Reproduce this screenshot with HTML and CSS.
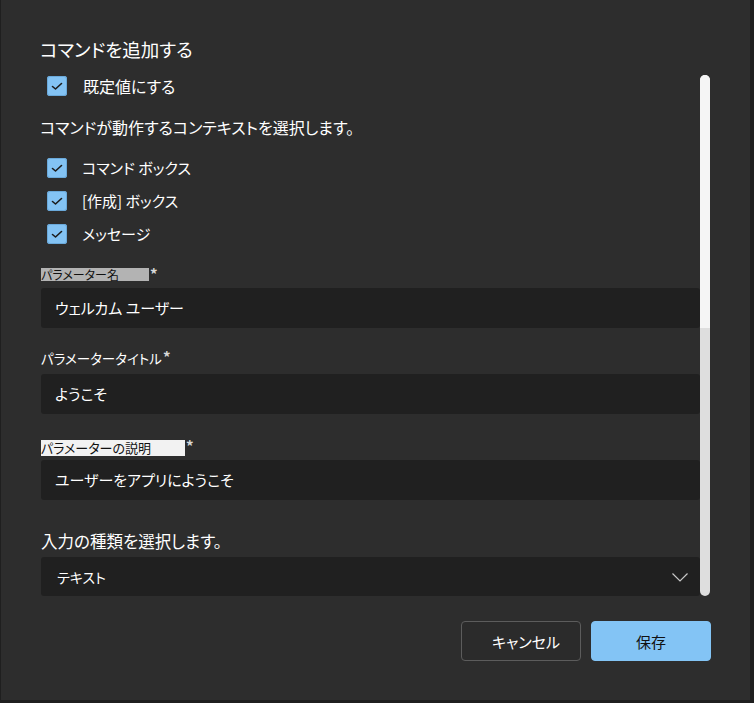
FILE: index.html
```html
<!DOCTYPE html>
<html lang="ja">
<head>
<meta charset="utf-8">
<title>コマンドを追加する</title>
<link rel="stylesheet" href="styles.css">
</head>
<body>
<div class="dialog">
  <h1 class="title">コマンドを追加する</h1>
  <div class="body">
    <div class="content">
      <label class="check first">
        <span class="box"><svg viewBox="0 0 20 20" width="20" height="20"><path d="M5.5 10.5 L8.5 13 L14.5 7.5" fill="none" stroke="#1c1c1c" stroke-width="1.6" stroke-linecap="round" stroke-linejoin="round"/></svg></span>
        <span class="check-text">既定値にする</span>
      </label>
      <p class="desc">コマンドが動作するコンテキストを選択します。</p>
      <div class="check-list">
        <label class="check">
          <span class="box"><svg viewBox="0 0 20 20" width="20" height="20"><path d="M5.5 10.5 L8.5 13 L14.5 7.5" fill="none" stroke="#1c1c1c" stroke-width="1.6" stroke-linecap="round" stroke-linejoin="round"/></svg></span>
          <span class="check-text">コマンド ボックス</span>
        </label>
        <label class="check">
          <span class="box"><svg viewBox="0 0 20 20" width="20" height="20"><path d="M5.5 10.5 L8.5 13 L14.5 7.5" fill="none" stroke="#1c1c1c" stroke-width="1.6" stroke-linecap="round" stroke-linejoin="round"/></svg></span>
          <span class="check-text">[作成] ボックス</span>
        </label>
        <label class="check">
          <span class="box"><svg viewBox="0 0 20 20" width="20" height="20"><path d="M5.5 10.5 L8.5 13 L14.5 7.5" fill="none" stroke="#1c1c1c" stroke-width="1.6" stroke-linecap="round" stroke-linejoin="round"/></svg></span>
          <span class="check-text">メッセージ</span>
        </label>
      </div>

      <div class="field-label l1"><span class="hl hl-grey">パラメーター名</span><span class="star">*</span></div>
      <div class="input i1">ウェルカム ユーザー</div>

      <div class="field-label l2"><span class="plain">パラメータータイトル</span><span class="star">*</span></div>
      <div class="input i2">ようこそ</div>

      <div class="field-label l3"><span class="hl hl-white">パラメーターの説明</span><span class="star">*</span></div>
      <div class="input i3">ユーザーをアプリにようこそ</div>

      <div class="select-label">入力の種類を選択します。</div>
      <div class="select">
        <span>テキスト</span>
        <svg class="chev" viewBox="0 0 16 9" width="16" height="9"><path d="M0.5 0.5 L8 8 L15.5 0.5" fill="none" stroke="#c8c8c8" stroke-width="1.2"/></svg>
      </div>
    </div>
    <div class="scrollbar"><div class="thumb"></div></div>
  </div>
  <div class="footer">
    <button class="btn cancel">キャンセル</button>
    <button class="btn save">保存</button>
  </div>
</div>
</body>
</html>
```

FILE: styles.css
```css
html, body {
  margin: 0;
  padding: 0;
}
body {
  background: #1f1f1f;
  width: 754px;
  height: 703px;
  overflow: hidden;
  font-family: "Noto Sans CJK JP", "Noto Sans", sans-serif;
  font-feature-settings: "palt" 1;
  color: #ffffff;
}
.dialog {
  margin-left: 1px;
  width: 749px;
  height: 700px;
  background: #2d2d2d;
  box-sizing: border-box;
  padding-left: 39px;
  display: flex;
  flex-direction: column;
}
.title {
  margin: 36px 0 0 0;
  font-size: 18.5px;
  font-weight: 400;
  line-height: 26px;
  height: 26px;
  color: #ffffff;
}
.body {
  margin-top: 13px;
  display: flex;
  height: 521px;
}
.content {
  width: 660px;
  padding-left: 1px;
  box-sizing: border-box;
  display: flex;
  flex-direction: column;
}
.check {
  display: flex;
  align-items: center;
  height: 22px;
  padding-left: 6px;
}
.box {
  width: 20px;
  height: 20px;
  border-radius: 3px;
  background: #83c3f4;
  box-shadow: inset 0 0 0 1px #6aa9da;
  display: block;
  flex: none;
}
.box svg { display: block; }
.check-text {
  margin-left: 15px;
  font-size: 15px;
  line-height: 22px;
  color: #ffffff;
}
.first .check-text {
  font-size: 16px;
  margin-left: 16px;
}
.desc {
  margin: 19px 0 0 -1px;
  font-size: 16px;
  line-height: 22px;
  height: 22px;
}
.check-list {
  margin-top: 19px;
  display: flex;
  flex-direction: column;
  gap: 11px;
}
.field-label {
  display: flex;
  align-items: flex-start;
  font-size: 12px;
}
.hl {
  display: block;
  color: #111111;
  line-height: 13px;
  height: 13px;
}
.hl-grey {
  background: #b3b3b3;
  width: 108px;
  font-size: 12px;
}
.hl-white {
  background: #f2f2f2;
  width: 144px;
  height: 16px;
  line-height: 16px;
  font-size: 13px;
}
.plain {
  font-size: 13.5px;
  line-height: 14px;
  color: #ffffff;
}
.star {
  margin-left: 1px;
  font-size: 15px;
  font-weight: 700;
  line-height: 12px;
  height: 12px;
  color: #d8d8d8;
}
.l1 { margin-top: 23px; height: 13px; }
.l2 { margin-top: 23px; height: 14px; }
.l3 { margin-top: 26px; height: 16px; }
.input {
  height: 40px;
  background: #202020;
  border-radius: 3px;
  box-sizing: border-box;
  padding-left: 14px;
  font-size: 15px;
  line-height: 40px;
  color: #ffffff;
}
.i1 { margin-top: 7px; }
.i2 { margin-top: 9px; }
.i3 { margin-top: 4px; }
.select-label {
  margin-top: 30px;
  font-size: 16.5px;
  line-height: 22px;
  height: 22px;
}
.select {
  margin-top: 5px;
  height: 39px;
  background: #202020;
  border-radius: 3px;
  display: flex;
  align-items: center;
  justify-content: space-between;
  padding: 0 12px 0 16px;
  font-size: 14px;
}
.chev { display: block; margin-top: 2px; }
.scrollbar {
  width: 10px;
  height: 521px;
  background: #dedede;
  border-radius: 5px;
  flex: none;
}
.thumb {
  height: 253px;
  background: #f5f5f5;
  border-radius: 5px 5px 0 0;
}
.footer {
  margin-top: 25px;
  display: flex;
  justify-content: flex-end;
  gap: 10px;
  padding-right: 39px;
}
.btn {
  width: 120px;
  height: 40px;
  border-radius: 4px;
  font-family: "Noto Sans CJK JP", "Noto Sans", sans-serif;
  font-feature-settings: "palt" 1;
  font-size: 15px;
  cursor: pointer;
}
.cancel {
  background: #2b2b2b;
  border: 1px solid #5c5c5c;
  color: #ffffff;
  padding-left: 16px;
}
.save {
  background: #83c4f5;
  border: 1px solid #83c4f5;
  color: #111111;
}
```
